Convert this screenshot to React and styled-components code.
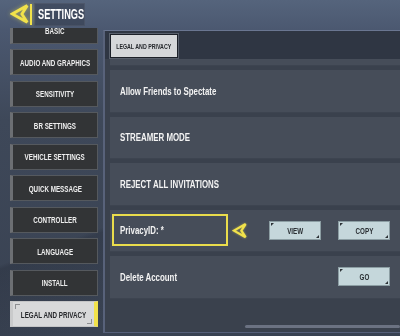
import React from "react";
import styled, { createGlobalStyle, css } from "styled-components";

const GlobalStyle = createGlobalStyle`
  html, body {
    margin: 0;
    padding: 0;
    background: #3c4657;
  }
  * {
    box-sizing: border-box;
  }
`;

const menu = [
  "BASIC",
  "AUDIO AND GRAPHICS",
  "SENSITIVITY",
  "BR SETTINGS",
  "VEHICLE SETTINGS",
  "QUICK MESSAGE",
  "CONTROLLER",
  "LANGUAGE",
  "INSTALL",
  "LEGAL AND PRIVACY",
];

const Dart = ({ size = 16 }) => (
  <svg width={size} height={size * 1.15} viewBox="0 0 16 18">
    <path
      d="M14.5 2 L2 9 L14.5 16 L10 9 Z"
      fill="none"
      stroke="#f1e24b"
      strokeWidth="2.4"
      strokeLinejoin="miter"
    />
  </svg>
);

export default function App() {
  return (
    <Screen>
      <GlobalStyle />
      <Header>
        <Logo>
          <Dart size={19} />
          <LogoBar />
        </Logo>
        <TitleBox>
          <Squeeze $origin="left">SETTINGS</Squeeze>
        </TitleBox>
      </Header>

      <Body>
        <Sidebar>
          <MenuList>
            {menu.map((item) => (
              <MenuItem key={item} $active={item === "LEGAL AND PRIVACY"}>
                <Squeeze>{item}</Squeeze>
              </MenuItem>
            ))}
          </MenuList>
        </Sidebar>

        <Panel>
          <TabBar>
            <Tab>
              <Squeeze>LEGAL AND PRIVACY</Squeeze>
            </Tab>
          </TabBar>

          <Rows>
            <Row $peek />
            <Row>
              <Label>Allow Friends to Spectate</Label>
            </Row>
            <Row>
              <Label>STREAMER MODE</Label>
            </Row>
            <Row>
              <Label>REJECT ALL INVITATIONS</Label>
            </Row>
            <Row $tight>
              <Highlight>
                <Label>PrivacyID: *</Label>
              </Highlight>
              <Pointer>
                <Dart size={15} />
              </Pointer>
              <Actions>
                <ActionButton>
                  <Squeeze>VIEW</Squeeze>
                </ActionButton>
                <ActionButton>
                  <Squeeze>COPY</Squeeze>
                </ActionButton>
              </Actions>
            </Row>
            <Row>
              <Label>Delete Account</Label>
              <Actions>
                <ActionButton>
                  <Squeeze>GO</Squeeze>
                </ActionButton>
              </Actions>
            </Row>
          </Rows>

          <ScrollTrack />
        </Panel>
      </Body>
    </Screen>
  );
}

const Screen = styled.div`
  width: 400px;
  height: 336px;
  overflow: hidden;
  display: flex;
  flex-direction: column;
  font-family: "Liberation Sans", Arial, sans-serif;
  font-weight: 700;
  background:
    linear-gradient(160deg, transparent 55%, rgba(30, 36, 48, 0.25) 56%, transparent 75%),
    linear-gradient(180deg, #55647c 0px, #4b5870 30px, #3e4859 120px, #394252 100%);
`;

const Header = styled.div`
  height: 28px;
  flex: none;
  display: flex;
  align-items: center;
  padding-left: 10px;
  gap: 2px;
`;

const Logo = styled.div`
  display: flex;
  align-items: center;
  gap: 1px;
  filter: drop-shadow(0 0 2px rgba(241, 226, 75, 0.55));
`;

const LogoBar = styled.div`
  width: 2px;
  height: 21px;
  background: #f1e24b;
`;

const TitleBox = styled.div`
  width: 51px;
  height: 23px;
  display: flex;
  align-items: center;
  padding-left: 3px;
  background: rgba(44, 52, 66, 0.45);
  border: 1px solid rgba(255, 255, 255, 0.06);
  color: #ffffff;
  font-size: 14px;
  white-space: nowrap;
`;

const Squeeze = styled.span`
  display: inline-block;
  white-space: nowrap;
  transform: scaleX(${(p) => p.$scale || 0.66});
  transform-origin: ${(p) => p.$origin || "center"} center;
`;

const Body = styled.div`
  flex: 1;
  min-height: 0;
  display: flex;
`;

const Sidebar = styled.div`
  width: 103px;
  flex: none;
  padding: 0 5px 0 10px;
  overflow: hidden;
`;

const MenuList = styled.div`
  margin-top: -10.5px;
  display: flex;
  flex-direction: column;
  gap: 5.5px;
`;

const corners = css`
  &::before,
  &::after {
    content: "";
    position: absolute;
    width: 4px;
    height: 4px;
    border-color: #8d8f92;
    border-style: solid;
  }
  &::before {
    top: 2px;
    left: 2px;
    border-width: 1px 0 0 1px;
  }
  &::after {
    bottom: 2px;
    right: 2px;
    border-width: 0 1px 1px 0;
  }
`;

const MenuItem = styled.div`
  position: relative;
  height: 26px;
  display: flex;
  align-items: center;
  justify-content: center;
  font-size: 9.5px;
  white-space: nowrap;
  color: ${(p) => (p.$active ? "#26282b" : "#eeeeee")};
  background: ${(p) => (p.$active ? "#d8d9da" : "#323436")};
  border: 1px solid ${(p) => (p.$active ? "#c4c5c6" : "#55595e")};
  border-left: 3px solid ${(p) => (p.$active ? "#c9cacb" : "#6c6f73")};
  border-right: ${(p) => (p.$active ? "4px solid #f1e24b" : "1px solid #55595e")};
  ${(p) => p.$active && corners}
`;

const Panel = styled.div`
  flex: 1;
  margin-top: 2px;
  margin-bottom: 3px;
  display: flex;
  flex-direction: column;
  min-width: 0;
  background: #3a414d;
  border-left: 2px solid #58627a;
  border-top: 1px solid #6a7691;
  border-bottom: 1px solid #56607a;
`;

const TabBar = styled.div`
  height: 28px;
  flex: none;
  padding: 3px 0 0 5px;
  background: #2f3643;
`;

const Tab = styled.div`
  width: 68px;
  height: 24px;
  display: flex;
  align-items: center;
  justify-content: center;
  background: #d5d7d9;
  border: 1px solid #1c2028;
  box-shadow: 0 0 0 1px #59606c;
  color: #24272b;
  font-size: 8px;
`;

const Rows = styled.div`
  flex: 1;
  min-height: 0;
  overflow: hidden;
  display: flex;
  flex-direction: column;
  gap: 4px;
  padding-left: 5px;
`;

const Row = styled.div`
  height: 42.5px;
  flex: none;
  display: flex;
  align-items: center;
  padding: 0 10px 0 ${(p) => (p.$tight ? "2px" : "10px")};
  margin-top: ${(p) => (p.$peek ? "-35.5px" : "0")};
  background: #464d59;
  border-bottom: 1px solid #3d4450;
`;

const Label = styled.span`
  display: inline-block;
  white-space: nowrap;
  color: #f3f3f3;
  font-size: 10.5px;
  transform: scaleX(0.75);
  transform-origin: left center;
`;

const Highlight = styled.div`
  width: 116px;
  height: 32px;
  display: flex;
  align-items: center;
  padding-left: 6px;
  border: 2px solid #eadd4c;
`;

const Pointer = styled.div`
  margin-left: 4px;
  display: flex;
  filter: drop-shadow(0 0 1px rgba(241, 226, 75, 0.5));
`;

const Actions = styled.div`
  margin-left: auto;
  display: flex;
  gap: 17px;
`;

const ActionButton = styled.div`
  position: relative;
  width: 52px;
  height: 19px;
  display: flex;
  align-items: center;
  justify-content: center;
  background: #c5d7db;
  border: 1px solid #8c9ea3;
  color: #2a2f33;
  font-size: 9.5px;

  &::before,
  &::after {
    content: "";
    position: absolute;
    width: 0;
    height: 0;
    border-style: solid;
  }
  &::before {
    top: 1px;
    left: 1px;
    border-width: 3px 3px 0 0;
    border-color: #2d3236 transparent transparent transparent;
  }
  &::after {
    bottom: 1px;
    right: 1px;
    border-width: 0 0 3px 3px;
    border-color: transparent transparent #2d3236 transparent;
  }
`;

const ScrollTrack = styled.div`
  flex: none;
  height: 3px;
  margin: 0 0 4px 140px;
  border-radius: 2px;
  background: #6b7282;
`;
